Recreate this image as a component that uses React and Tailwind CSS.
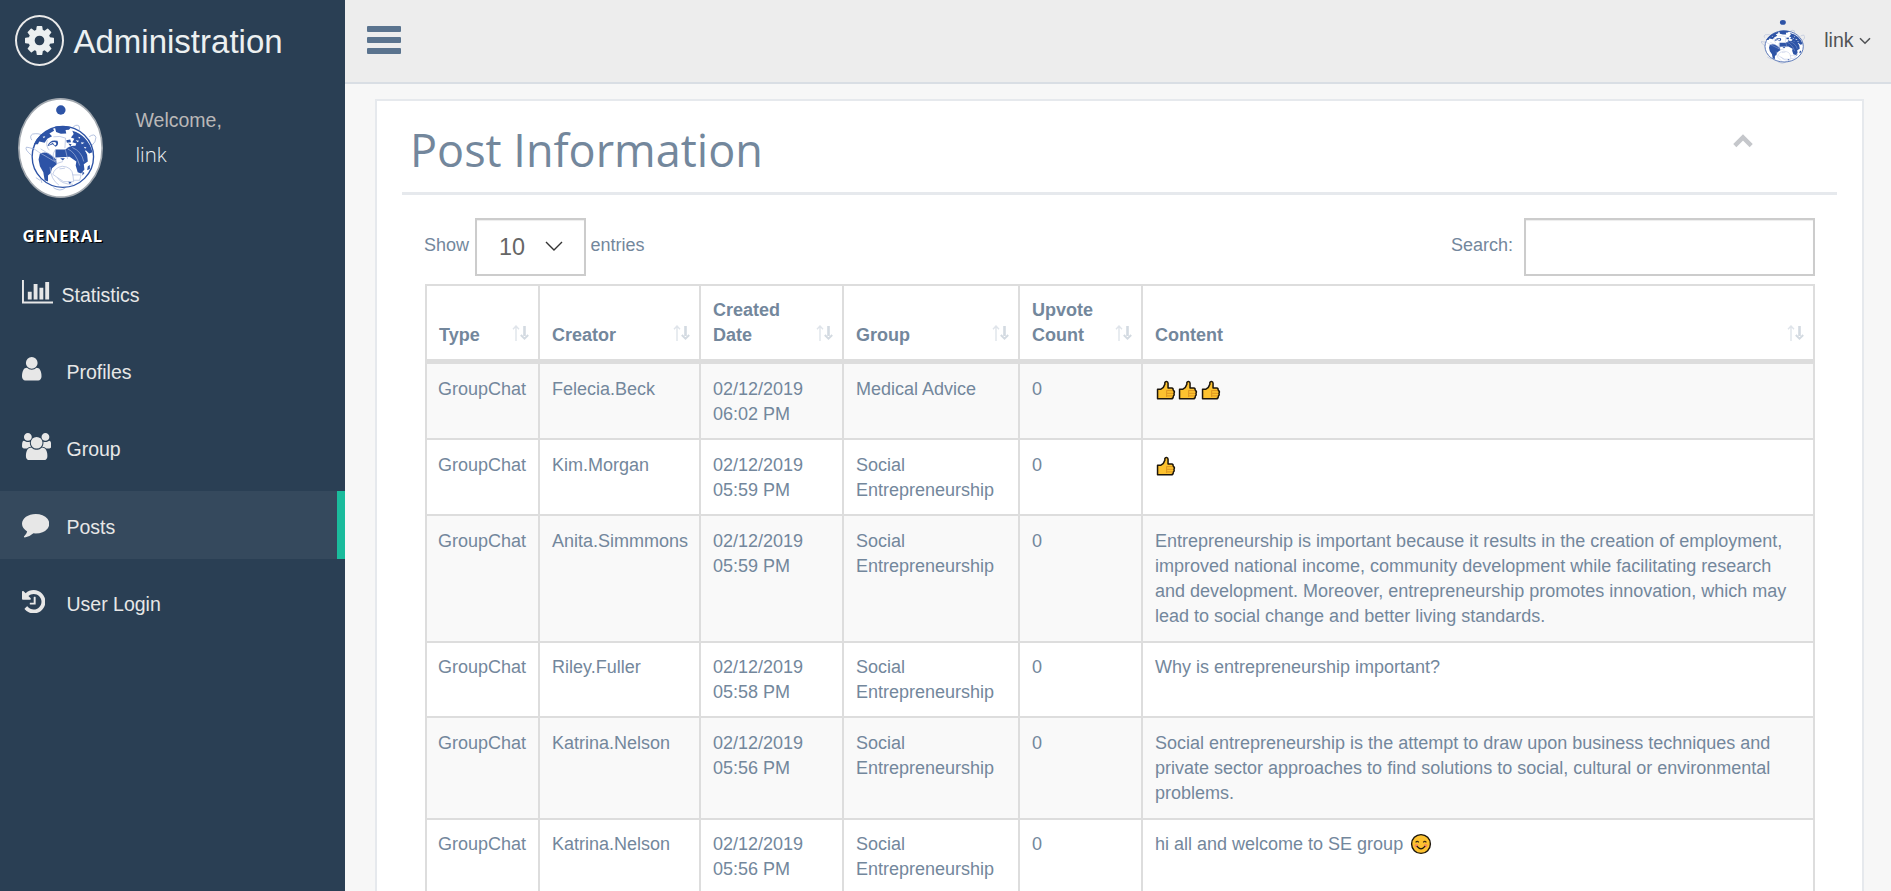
const COG = "M1152 896q0-106-75-181t-181-75-181 75-75 181 75 181 181 75 181-75 75-181zm512-109v222q0 12-8 23t-20 13l-185 28q-19 54-39 91 35 50 107 138 10 12 10 25t-9 23q-27 37-99 108t-94 71q-12 0-26-9l-138-108q-44 23-91 38-16 136-29 186-7 28-36 28h-222q-14 0-24.5-8.5t-11.5-21.5l-28-184q-49-16-90-37l-141 107q-10 9-25 9-14 0-25-11-126-114-165-168-7-10-7-23 0-12 8-23 15-21 51-66.5t54-70.5q-27-50-41-99l-183-27q-13-2-21-12.5t-8-23.5v-222q0-12 8-23t19-13l186-28q14-46 39-92-40-57-107-138-10-12-10-24 0-10 9-23 26-36 98.5-107.5t94.5-71.5q13 0 26 10l138 107q44-23 91-38 16-136 29-186 7-28 36-28h222q14 0 24.5 8.5t11.5 21.5l28 184q49 16 90 37l142-107q9-9 24-9 13 0 25 10 129 119 165 170 7 8 7 22 0 12-8 23-15 21-51 66.5t-54 70.5q26 50 41 98l183 28q13 2 21 12.5t8 23.5z";
const CHART = "M640 1024v512h-256v-512h256zm384-512v1024h-256v-1024h256zm1024 1152v128h-2048v-1536h128v1408h1920zm-640-896v768h-256v-768h256zm384-384v1152h-256v-1152h256z";
const USER = "M1536 1399q0 109-62.5 187t-150.5 78h-854q-88 0-150.5-78t-62.5-187q0-85 8.5-160.5t31.5-152 58.5-131 94-89 134.5-34.5q131 128 313 128t313-128q76 0 134.5 34.5t94 89 58.5 131 31.5 152 8.5 160.5zm-256-887q0 159-112.5 271.5t-271.5 112.5-271.5-112.5-112.5-271.5 112.5-271.5 271.5-112.5 271.5 112.5 112.5 271.5z";
const USERS = "M529 896q-162 5-265 128h-134q-82 0-138-40.5t-56-118.5q0-353 124-353 6 0 43.5 21t97.5 42.5 119 21.5q67 0 133-23-5 37-5 66 0 143 81 256zm1071 637q0 120-73 189.5t-194 69.5h-874q-121 0-194-69.5t-73-189.5q0-53 3.5-103.5t14-109 26.5-108.5 43-97.5 62-81 85.5-53.5 111.5-20q10 0 43 21.5t73 48 107 48 135 21.5 135-21.5 107-48 73-48 43-21.5q61 0 111.5 20t85.5 53.5 62 81 43 97.5 26.5 108.5 14 109 3.5 103.5zm-1024-1277q0 106-75 181t-181 75-181-75-75-181 75-181 181-75 181 75 75 181zm704 384q0 159-112.5 271.5t-271.5 112.5-271.5-112.5-112.5-271.5 112.5-271.5 271.5-112.5 271.5 112.5 112.5 271.5zm576 225q0 78-56 118.5t-138 40.5h-134q-103-123-265-128 81-113 81-256 0-29-5-66 66 23 133 23 59 0 119-21.5t97.5-42.5 43.5-21q124 0 124 353zm-128-609q0 106-75 181t-181 75-181-75-75-181 75-181 181-75 181 75 75 181z";
const COMMENT = "M1792 896q0 174-120 321.5t-326 233-450 85.5q-70 0-145-8-198 175-460 242-49 14-114 22-17 2-30.5-9t-17.5-29v-1q-3-4-.5-12t2-10 4.5-9.5l6-9 7-8.5 8-9q7-8 31-34.5t34.5-38 31-39.5 32.5-51 27-59 26-76q-157-89-247.5-220t-90.5-281q0-130 71-248.5t191-204.5 286-136.5 348-50.5q244 0 450 85.5t326 233 120 321.5z";
const HISTORY = "M1664 896q0 156-61 298t-164 245-245 164-298 61q-172 0-327-72.5t-264-204.5q-7-10-6.5-22.5t8.5-20.5l137-138q10-9 25-9 16 2 23 12 73 95 179 147t225 52q104 0 198.5-40.5t163.5-109.5 109.5-163.5 40.5-198.5-40.5-198.5-109.5-163.5-163.5-109.5-198.5-40.5q-98 0-188 35.5t-160 101.5l137 138q31 30 14 69-17 40-59 40h-448q-26 0-45-19t-19-45v-448q0-42 40-59 39-17 69 14l130 129q107-101 244.5-156.5t284.5-55.5q156 0 298 61t245 164 164 245 61 298zm-640-288v448q0 14-9 23t-23 9h-320q-14 0-23-9t-9-23v-64q0-14 9-23t23-9h224v-352q0-14 9-23t23-9h64q14 0 23 9t9 23z";

const NAV = [
  { label: "Statistics", path: CHART, box: "0 256 2048 1536", icon: "w-[31px] h-[23.5px] mt-[21px]", slot: "w-[39.5px]" },
  { label: "Profiles", path: USER, box: "256 128 1280 1536", icon: "w-[19.5px] h-[23.5px] mt-[21px]", slot: "w-[44.5px]" },
  { label: "Group", path: USERS, box: "-64 0 1920 1792", icon: "w-[29.3px] h-[27.3px] mt-[19.5px]", slot: "w-[44.5px]" },
  { label: "Posts", path: COMMENT, box: "0 256 1792 1536", icon: "w-[27.3px] h-[23.4px] mt-[23.5px]", slot: "w-[44.5px]", active: true },
  { label: "User Login", path: HISTORY, box: "128 128 1536 1536", icon: "w-[23.4px] h-[23.4px] mt-[21.5px]", slot: "w-[44.5px]" },
];

const COLUMNS = ["Type", "Creator", "Created Date", "Group", "Upvote Count", "Content"];

const ROWS = [
  { creator: "Felecia.Beck", time: "06:02 PM", group: "Medical Advice", thumbs: 3, size: "h-[76px] pt-[13px]" },
  { creator: "Kim.Morgan", time: "05:59 PM", group: "Social Entrepreneurship", thumbs: 1, size: "h-[76px] pt-[13px]" },
  { creator: "Anita.Simmmons", time: "05:59 PM", group: "Social Entrepreneurship", text: "Entrepreneurship is important because it results in the creation of employment, improved national income, community development while facilitating research and development. Moreover, entrepreneurship promotes innovation, which may lead to social change and better living standards.", size: "h-[127px] pt-[13px]" },
  { creator: "Riley.Fuller", time: "05:58 PM", group: "Social Entrepreneurship", text: "Why is entrepreneurship important?", size: "h-[75px] pt-[12px]" },
  { creator: "Katrina.Nelson", time: "05:56 PM", group: "Social Entrepreneurship", text: "Social entrepreneurship is the attempt to draw upon business techniques and private sector approaches to find solutions to social, cultural or environmental problems.", size: "h-[102px] pt-[13px]" },
  { creator: "Katrina.Nelson", time: "05:56 PM", group: "Social Entrepreneurship", text: "hi all and welcome to SE group ", smile: true, size: "h-[76px] pt-[12px]" },
];

const GRID = "grid grid-cols-[113px_161px_143px_176px_123px_672px] border-[#ddd]";

function GlobeArt() {
  return (
    <g>
      <circle cx="152" cy="60" r="14" fill="#2d53a6" />
      <g fill="none" stroke="#8fa3d0" strokeWidth="2">
        <path d="M66 196Q44 178 50 171Q66 172 90 188L134 214" />
        <path d="M66 150Q58 138 68 132Q86 128 98 136" />
        <path d="M184 116Q196 100 206 108Q210 116 204 124" />
        <path d="M236 140Q252 128 256 142Q256 156 244 166" />
        <path d="M130 292Q150 306 166 292" />
        <path d="M78 262L90 270M92 266L96 278" />
      </g>
      <circle cx="158" cy="200" r="91" fill="#fff" stroke="#2d53a6" strokeWidth="4" />
      <g fill="#2d53a6">
        <path d="M134 110Q158 104 182 112L176 119L166 120L168 130L152 131L138 126Z" />
        <path d="M72 162Q86 130 128 114L132 122L118 130L126 138L112 146L104 158L88 154L84 162Z" />
        <path d="M186 122Q232 136 246 186L236 190L226 180L220 186L206 172L194 170L198 160L186 156L192 146L182 142L190 132Z" />
        <path d="M136 178L166 178Q180 164 200 168Q224 174 230 194L232 214L220 222L222 238L212 250L202 246L196 226L198 214L178 200L136 202Z" />
        <path d="M90 190Q110 182 122 194L138 208L140 222L126 234L122 248L114 256L114 274L104 270L100 246L90 228L86 208Z" />
        <path d="M112 168Q120 146 142 152Q148 164 136 170L128 162Z" />
        <path d="M168 150L180 148L182 156L170 158ZM174 160L184 162L180 168ZM232 228L238 224L238 236L230 240ZM216 244L222 248L216 256ZM150 204L164 204L158 211ZM174 274L184 276L178 282Z" />
      </g>
      <g fill="#fff">
        <path d="M196 150L206 152L202 156ZM212 156L222 158L214 162ZM220 170L228 172L224 176ZM204 140L210 142L206 146ZM98 140L106 138L102 144Z" />
        <path d="M116 166Q122 154 136 156Q142 162 134 166L128 158Z" />
      </g>
      <g fill="none" stroke="#aab8dc" strokeWidth="2">
        <path d="M66 172L90 188L134 214L140 206L92 176" />
        <path d="M136 178Q120 200 140 220L158 214M166 180L172 206M172 176Q196 186 208 226M186 172Q214 184 220 214" />
        <path d="M130 140Q150 136 166 144L164 174M112 150Q106 168 118 180" />
        <path d="M128 252Q134 232 156 228Q186 230 188 256L190 274H160L142 262ZM142 262Q152 282 188 282M148 236L164 234" />
        <path d="M120 230Q122 268 146 284M186 254H212L208 270H190" />
      </g>
    </g>
  );
}

function Icon({ box, path, className }) {
  return (
    <svg viewBox={box} preserveAspectRatio="none" className={className} fill="currentColor">
      <path d={path} />
    </svg>
  );
}

function SortIcon() {
  return (
    <svg viewBox="0 0 17 16" className="h-[16px] w-[17px] shrink-0" fill="none">
      <path d="M4 16V1M1 4.3L4 1L7 4.3" stroke="#dfe4ea" strokeWidth="1.4" />
      <path d="M12.5 1V11" stroke="#d3dae1" strokeWidth="2.6" />
      <path d="M8.8 10L12.5 13.6L16.2 10" stroke="#d3dae1" strokeWidth="2" />
    </svg>
  );
}

function Thumb() {
  return (
    <svg viewBox="0 0 22 20" className="h-[20px] w-[22.3px]" fill="none">
      <path d="M2.4 9.2H5.8C7.8 8 9.2 6.2 9.7 4.2V2.6C10.2 1.2 12.7 1.2 12.9 3.1V8.1H16.6C18 8.1 18.3 9.4 17.8 10.2C19.6 10.9 19.6 12.6 18.7 13.2C19.4 14.2 19 15.4 18.2 15.9C18.2 17.4 17.5 18.8 16 18.8H2.4Z" fill="#fdc22f" stroke="#1d160c" strokeWidth="1.5" strokeLinejoin="round" />
      <path d="M11.9 10.6H17.6M12 13.3H18M12 15.9H17.6M11.5 10.2V17" stroke="#d8901e" strokeWidth="0.9" />
    </svg>
  );
}

function Smile() {
  return (
    <svg viewBox="0 0 22 22" className="ml-[1.5px] inline-block h-[22px] w-[22px] align-[-5px]" fill="none">
      <circle cx="11" cy="11" r="9.4" fill="#fdc22f" stroke="#1d160c" strokeWidth="1.4" />
      <circle cx="6.4" cy="12.8" r="1.8" fill="#f58b5c" />
      <circle cx="15.6" cy="12.8" r="1.8" fill="#f58b5c" />
      <path d="M5.6 9.4Q7.2 7.4 8.8 9.4M13.2 9.4Q14.8 7.4 16.4 9.4" stroke="#3b2a12" strokeWidth="1.1" />
      <path d="M6.8 13.2Q11 18.4 15.2 13.2" stroke="#1d160c" strokeWidth="1.3" />
    </svg>
  );
}

function Sidebar() {
  return (
    <aside className="flex w-[345px] shrink-0 flex-col bg-[#2a3f54]">
      <div className="flex h-[98px] items-start pl-[15px] pt-[15px] text-[#ecf0f1]">
        <div className="flex h-[51px] w-[49px] items-center justify-center rounded-[50%] border-2 border-[#eaeaea]">
          <Icon path={COG} box="128 128 1536 1536" className="h-[29px] w-[29px]" />
        </div>
        <span className="ml-[9.5px] mt-[8px] text-[33px] leading-[38px]">Administration</span>
      </div>
      <div className="flex h-[128px] items-start pl-[18px]">
        <svg viewBox="25 24 252 299" preserveAspectRatio="none" className="h-[100px] w-[85px]">
          <ellipse cx="151" cy="173.5" rx="123.5" ry="147" fill="#fff" stroke="#a3a9b0" strokeWidth="5" />
          <GlobeArt />
        </svg>
        <div className="ml-[32.5px] pt-[9px]">
          <div className="text-[19.5px] leading-[26px] text-[#bab8b8]">Welcome,</div>
          <div className="mt-[8px] font-['Open_Sans'] text-[20.4px] font-light leading-[26px] text-[#ecf0f1]">link</div>
        </div>
      </div>
      <h3 className="h-[33px] pl-[22.5px] font-['Open_Sans'] text-[16.5px] font-bold leading-[20px] tracking-[0.69px] text-white [text-shadow:1.4px_1.4px_#000]">GENERAL</h3>
      <nav className="flex flex-col gap-[9.33px] text-[19.5px] text-[#e7e7e7]">
        {NAV.map((n) => (
          <a key={n.label} className={n.active ? "flex h-[68px] items-start border-r-[8px] border-[#1abb9c] bg-[#35495d] pl-[22px]" : "flex h-[68px] items-start pl-[22px]"}>
            <span className={`${n.slot} shrink-0`}>
              <Icon path={n.path} box={n.box} className={n.icon} />
            </span>
            <span className="mt-[22.6px] leading-[26px]">{n.label}</span>
          </a>
        ))}
      </nav>
    </aside>
  );
}

function TopBar() {
  return (
    <header className="flex h-[84px] shrink-0 items-start justify-between border-b-2 border-[#d9dee4] bg-[#ededed] pl-[22px] pr-[20px]">
      <svg viewBox="0 0 34 28" className="mt-[26px] h-[28px] w-[34px]" fill="#5a738e">
        <rect width="34" height="6" rx="1" />
        <rect y="11" width="34" height="6" rx="1" />
        <rect y="22" width="34" height="6" rx="1" />
      </svg>
      <div className="flex items-start">
        <svg viewBox="48 40 210 265" preserveAspectRatio="none" className="mt-[19.4px] h-[45.4px] w-[44.2px]">
          <GlobeArt />
        </svg>
        <span className="ml-[19.5px] mt-[27px] text-[19.5px] leading-[26px] text-[#515356]">link</span>
        <svg viewBox="0 0 12 8" className="ml-[5.5px] mt-[36.5px] h-[8px] w-[12px]" fill="none" stroke="#515356" strokeWidth="1.6">
          <path d="M1 1.2L6 6.2L11 1.2" />
        </svg>
      </div>
    </header>
  );
}

function PostTable() {
  return (
    <div className="mt-[8px] w-[1390px] border-l-2 border-t-2 border-[#ddd]">
      <div className={`${GRID} h-[78px] border-b-[5px] font-bold`}>
        {COLUMNS.map((c) => (
          <div key={c} className="flex items-end justify-between border-r-2 border-[#ddd] pb-[11px] pl-[12px] pr-[9px]">
            <span className={c.includes(" ") ? "w-[70px]" : ""}>{c}</span>
            <span className="pb-[7px]"><SortIcon /></span>
          </div>
        ))}
      </div>
      {ROWS.map((r, i) => {
        const first = `border-r-2 border-[#ddd] pl-[11px] ${r.size}`;
        const cell = `border-r-2 border-[#ddd] pl-[12px] ${r.size}`;
        return (
          <div key={i} className={`${GRID} border-b-2 ${i % 2 ? "bg-white" : "bg-[#f9f9f9]"} ${r.size.split(" ")[0]}`}>
            <div className={first}>GroupChat</div>
            <div className={cell}>{r.creator}</div>
            <div className={`${cell} pr-[38px]`}>02/12/2019 {r.time}</div>
            <div className={`${cell} pr-[11px]`}>{r.group}</div>
            <div className={cell}>0</div>
            <div className={`${cell} pr-[11px]`}>
              {r.thumbs ? (
                <div className="flex pt-[3px]">
                  {Array.from({ length: r.thumbs }, (_, k) => <Thumb key={k} />)}
                </div>
              ) : r.text}
              {r.smile && <Smile />}
            </div>
          </div>
        );
      })}
    </div>
  );
}

export default function App() {
  return (
    <div className="flex h-[891px] w-[1891px] overflow-hidden bg-[#f7f7f7] font-['Liberation_Sans',Arial,sans-serif] text-[18px] leading-[25px] text-[#73879c]">
      <Sidebar />
      <main className="flex min-w-0 grow flex-col">
        <TopBar />
        <section className="ml-[30px] mt-[15px] h-[900px] w-[1489px] shrink-0 border-2 border-[#e6e9ed] bg-white px-[25px]">
          <div className="flex h-[94px] items-start justify-between border-b-[3px] border-[#e6e9ed] pl-[8px] pr-[84px]">
            <h2 className="mt-[19px] font-['Open_Sans'] text-[45px] leading-[60px]">Post Information</h2>
            <svg viewBox="0 0 20 14" className="mt-[33px] h-[14px] w-[20px]" fill="none" stroke="#c5c7cb" strokeWidth="4.4">
              <path d="M1.8 11.6L10 3.4L18.2 11.6" />
            </svg>
          </div>
          <div className="pl-[23px] pt-[23px]">
            <div className="flex w-[1390px] items-start justify-between">
              <div className="flex items-start">
                <span className="-ml-px mt-[15px] w-[46px]">Show</span>
                <div className="ml-[5px] flex h-[58px] w-[111px] items-start border-2 border-[#ccc] bg-white pl-[22px] shadow-[inset_0_1px_1px_rgba(0,0,0,0.075)]">
                  <span className="mt-[13px] text-[23.4px] leading-[28px] text-[#666]">10</span>
                  <svg viewBox="0 0 18 11" className="ml-[20px] mt-[21px] h-[11px] w-[18px]" fill="none" stroke="#333" strokeWidth="1.4">
                    <path d="M1 1L9 9L17 1" />
                  </svg>
                </div>
                <span className="ml-[4.5px] mt-[15px]">entries</span>
              </div>
              <div className="flex items-start">
                <span className="mt-[15px]">Search:</span>
                <div className="ml-[11px] h-[58px] w-[291px] border-2 border-[#ccc] bg-white shadow-[inset_0_1px_1px_rgba(0,0,0,0.075)]" />
              </div>
            </div>
            <PostTable />
          </div>
        </section>
      </main>
    </div>
  );
}
